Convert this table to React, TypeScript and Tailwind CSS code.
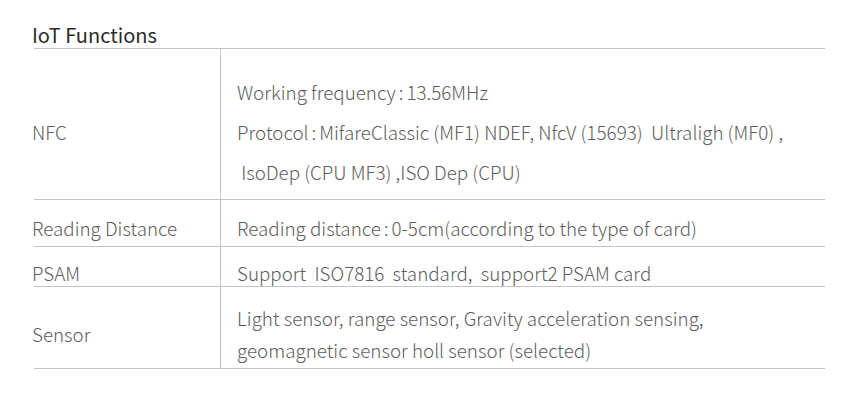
import type { ReactNode } from 'react'

const font = { fontFamily: '"Noto Sans CJK SC", "Noto Sans", sans-serif' }

const Colon = () => <span className="mx-[3px]">:</span>

type Row = {
  label: string
  lines: ReactNode[]
  height: string
  pad: string
  leading: string
}

const rows: Row[] = [
  {
    label: 'NFC',
    lines: [
      <>Working frequency<Colon />13.56MHz</>,
      <>Protocol<Colon />MifareClassic (MF1) NDEF, NfcV (15693)  Ultraligh (MF0) ,</>,
      ' IsoDep (CPU MF3) ,ISO Dep (CPU)',
    ],
    height: 'h-[151px]',
    pad: 'pt-[23px]',
    leading: 'leading-[40px]',
  },
  {
    label: 'Reading Distance',
    lines: [<>Reading distance<Colon />0-5cm(according to the type of card)</>],
    height: 'h-[47px]',
    pad: 'pt-[10px]',
    leading: 'leading-[36px]',
  },
  {
    label: 'PSAM',
    lines: ['Support  ISO7816  standard,  support2 PSAM card'],
    height: 'h-[40px]',
    pad: 'pt-[8px]',
    leading: 'leading-[36px]',
  },
  {
    label: 'Sensor',
    lines: [
      'Light sensor, range sensor, Gravity acceleration sensing,',
      'geomagnetic sensor holl sensor (selected)',
    ],
    height: 'h-[82px]',
    pad: 'pt-[15px]',
    leading: 'leading-[32px]',
  },
]

export default function App() {
  return (
    <div className="h-[405px] w-[859px] bg-white" style={font}>
      <div className="pl-[32px] pt-[22px]">
        <h2 className="text-[20px] font-normal leading-[26px] text-[#2a2a2a]">
          IoT Functions
        </h2>
      </div>
      <div className="ml-[34px] w-[791px] border-t border-[#c4c4c4]">
        {rows.map((row) => (
          <div
            key={row.label}
            className={`grid grid-cols-[186px_1fr] border-b border-[#c4c4c4] ${row.height}`}
          >
            <div
              className={`-ml-[2px] flex items-start ${row.pad} text-[18.8px] font-light text-[#5c5c5c]`}
            >
              <div className={row.leading}>
                {row.lines.length === 3 ? (
                  <>
                    <div>&nbsp;</div>
                    <div>{row.label}</div>
                  </>
                ) : row.lines.length === 2 ? (
                  <div className="pt-[16px]">{row.label}</div>
                ) : (
                  <div>{row.label}</div>
                )}
              </div>
            </div>
            <div
              className={`border-l border-[#c4c4c4] pl-[16px] ${row.pad} text-[18.8px] font-light text-[#5c5c5c] ${row.leading}`}
            >
              {row.lines.map((line, i) => (
                <div key={i} className="whitespace-pre">
                  {line}
                </div>
              ))}
            </div>
          </div>
        ))}
      </div>
    </div>
  )
}
